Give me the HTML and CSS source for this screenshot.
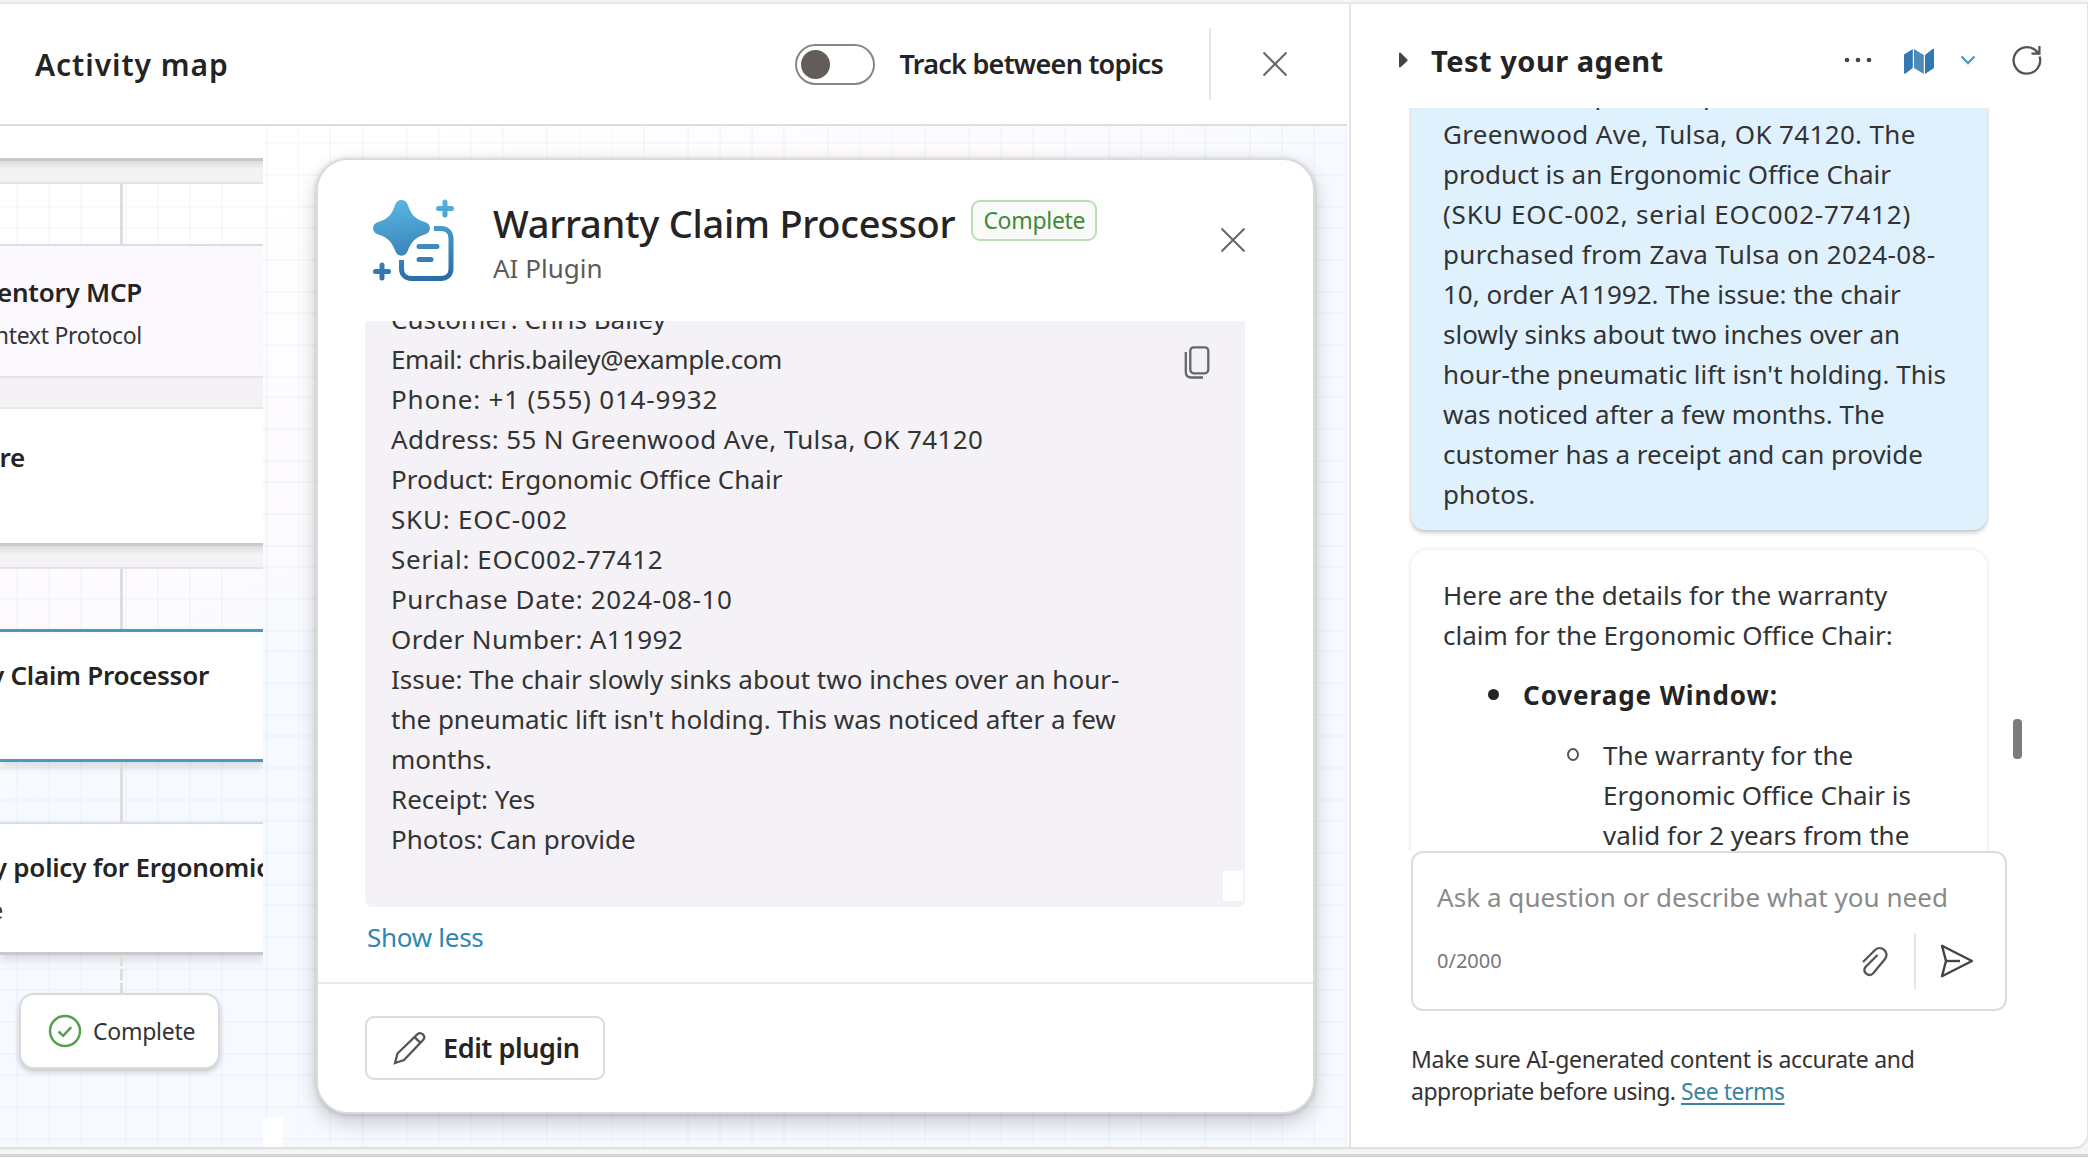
FILE: index.html
```html
<!DOCTYPE html>
<html lang="en">
<head>
<meta charset="utf-8">
<title>Activity map</title>
<link rel="stylesheet" href="styles.css">
</head>
<body>
<div class="app">
  <main class="map">
    <header class="map-head">
      <h1>Activity map</h1>
      <span class="toggle"><span class="knob"></span></span>
      <span class="toggle-label">Track between topics</span>
      <span class="head-divider"></span>
      <svg class="close" width="26" height="26" viewBox="0 0 26 26"><path d="M1.5 1.5l23 23M24.5 1.5l-23 23"/></svg>
    </header>
    <div class="canvas">
      <div class="grid"></div>
      <section class="flow">
        <div class="prev-node"></div>
        <div class="band"></div>
        <div class="link"></div>
        <div class="node mcp"><div class="name w-mcp">Inventory MCP</div><div class="kind w-mcp">Model Context Protocol</div></div>
        <div class="band plain"></div>
        <div class="node store"><div class="name w-store">Get store</div></div>
        <div class="band"></div>
        <div class="link"></div>
        <div class="node active"><div class="name w-claim">Warranty Claim Processor</div></div>
        <div class="link"></div>
        <div class="node policy"><div class="name w-policy">Warranty policy for Ergonomic</div><div class="kind w-know">Knowledge</div></div>
        <div class="link dashed"></div>
        <div class="done">
          <svg width="34" height="34" viewBox="0 0 34 34"><circle cx="17" cy="17" r="15"/><path d="M10.5 17.5l4.7 4.3 8-8.6"/></svg>
          <span>Complete</span>
        </div>
      </section>
      <span class="corner"></span>
      <section class="card">
        <div class="card-head">
          <svg class="logo" width="82" height="82" viewBox="0 0 82 82">
            <defs><linearGradient id="lg" gradientUnits="userSpaceOnUse" x1="34" y1="0" x2="44" y2="82"><stop offset="0" stop-color="#58b7e0"/><stop offset="1" stop-color="#2c6ca8"/></linearGradient></defs>
            <path fill="url(#lg)" d="M28.5 1c3 0 5.300 1.800 6.200 4.600C38 15 41 19.500 51 22.800c8 2 8 11 0 13C41 39 38 44 34.700 52c-2 6.200-10.400 6.200-12.400 0C19 44 16 39 6 35.800c-8-2-8-11 0-13C16 19.500 19 15 22.300 5.600 23.200 2.800 25.500 1 28.500 1z"/>
            <g fill="none" stroke="url(#lg)" stroke-width="5">
              <path d="M61 29.500h7c6 0 10 4 10 10v30c0 6-4 10-10 10H38.500c-6 0-10-4-10-10V61"/>
              <path stroke-linecap="round" d="M46 47.500h18M46 60.500h12"/>
              <path stroke-linecap="round" d="M72 3v13M65.500 9.500h13M9 66v13M2.500 72.500h13"/>
            </g>
          </svg>
          <div class="titles">
            <div class="title-row"><h2>Warranty Claim Processor</h2><span class="badge">Complete</span></div>
            <div class="subtitle">AI Plugin</div>
          </div>
          <svg class="close card-close" width="26" height="26" viewBox="0 0 26 26"><path d="M1.500 1.500l23 23M24.500 1.500l-23 23"/></svg>
        </div>
        <div class="details">
          <div class="detail-text">
            <div>Customer: Chris Bailey</div>
            <div class="tight">Email: chris.bailey@example.com</div>
            <div class="widest">Phone: +1 (555) 014-9932</div>
            <div class="wide">Address: 55 N Greenwood Ave, Tulsa, OK 74120</div>
            <div>Product: Ergonomic Office Chair</div>
            <div class="widest">SKU: EOC-002</div>
            <div class="wider">Serial: EOC002-77412</div>
            <div class="wider">Purchase Date: 2024-08-10</div>
            <div class="wide">Order Number: A11992</div>
            <div>Issue: The chair slowly sinks about two inches over an hour-<br>the pneumatic lift isn't holding. This was noticed after a few<br>months.</div>
            <div>Receipt: Yes</div>
            <div>Photos: Can provide</div>
          </div>
          <svg class="copy" width="26" height="33" viewBox="0 0 26 33"><rect x="6.300" y="1.300" width="18" height="26" rx="3.500"/><path d="M1.800 6v20c0 3.500 2 5.500 5.500 5.500H19"/></svg>
          <span class="resize"></span>
        </div>
        <a class="show-less">Show less</a>
        <div class="card-foot">
          <button class="edit"><svg width="34" height="34" viewBox="0 0 34 34"><path d="M2 32l2.500-9.500L24.500 3.200c3.500-3 8.800 1.800 5.800 5.600L11 29z M21.500 6.200l6.300 6"/></svg>Edit plugin</button>
        </div>
      </section>
    </div>
  </main>
  <aside class="chat">
    <header class="chat-head">
      <svg class="caret" width="9" height="16" viewBox="0 0 9 16"><path d="M0 1.500C0 .5 1 .2 1.800 1L8 7c.8.800.8 1.500 0 2.200L1.800 15C1 15.800 0 15.500 0 14.500z"/></svg>
      <h3>Test your agent</h3>
      <svg class="dots" width="28" height="6" viewBox="0 0 28 6"><circle cx="3" cy="3" r="2.300"/><circle cx="14" cy="3" r="2.300"/><circle cx="25" cy="3" r="2.300"/></svg>
      <svg class="mapicon" width="30" height="27" viewBox="0 0 30 27"><path d="M0 6.500L8.800 1v19L1.500 25.500Q0 26.500 0 24.500z"/><path class="fold" d="M10 1l9.800 6v19L10 20z"/><path d="M21 7l7.500-6Q30 0 30 2v18l-9 6z"/></svg>
      <svg class="chev" width="16" height="10" viewBox="0 0 16 10"><path d="M1.500 1.500L8 8l6.500-6.500"/></svg>
      <svg class="refresh" width="32" height="32" viewBox="0 0 32 32"><path d="M28.600 12.500A13.300 13.300 0 1 1 23.500 5.500L28 9.300M20.500 9.600h7.900V2"/></svg>
    </header>
    <div class="log">
      <div class="bubble">Customer reports help at 55 N<br><span class="wide">Greenwood Ave, Tulsa, OK 74120. The</span><br>product is an Ergonomic Office Chair<br><span class="widest">(SKU EOC-002, serial EOC002-77412)</span><br><span class="wide">purchased from Zava Tulsa on 2024-08-</span><br>10, order A11992. The issue: the chair<br>slowly sinks about two inches over an<br>hour-the pneumatic lift isn't holding. This<br>was noticed after a few months. The<br>customer has a receipt and can provide<br>photos.</div>
      <div class="reply">
        <p>Here are the details for the warranty<br>claim for the Ergonomic Office Chair:</p>
        <div class="item"><span class="disc"></span><b>Coverage Window:</b></div>
        <div class="item sub"><span class="ring"></span><span>The warranty for the<br>Ergonomic Office Chair is<br>valid for 2 years from the</span></div>
      </div>
      <span class="thumb"></span>
    </div>
    <div class="composer">
      <div class="placeholder">Ask a question or describe what you need</div>
      <div class="tools">
        <span class="count">0/2000</span>
        <svg class="clip" width="28" height="32" viewBox="0 0 28 32"><path d="M2 17L14 5c6-5.500 15 2 10 9L12 28.500c-4.500 4-11-1.500-7.500-6.500L16.500 10"/></svg>
        <span class="tool-divider"></span>
        <svg class="send" width="34" height="34" viewBox="0 0 34 34"><path d="M2 1.800L32 17 2 32.200 6 17z"/><path d="M6 17h14"/></svg>
      </div>
    </div>
    <p class="terms">Make sure AI-generated content is accurate and<br><span>appropriate before using. <a>See terms</a></span></p>
  </aside>
</div>
<footer class="edge"></footer>
</body>
</html>
```
FILE: styles.css
```css
* { box-sizing: border-box; }
body { margin: 0; width: 2088px; height: 1158px; overflow: hidden; background: #f5f5f6; color: #333; font: 26px/40px "Noto Sans", "Open Sans", sans-serif; display: flex; flex-direction: column; }
h1, h2, h3, p { margin: 0; }
svg { display: block; flex: none; fill: none; }

.app { display: flex; height: 1145px; background: #fff; border-top: 2px solid #e8e8e8; border-right: 1px solid #e3e3e6; border-bottom-right-radius: 14px; margin-top: 2px; box-shadow: 0 2px 2px #dcdcde; flex: none; }
.edge { height: 3px; margin-top: 7px; background: #d3d2d5; flex: none; }

.map { width: 1349px; display: flex; flex-direction: column; }
.map-head { height: 122px; width: 1347px; border-bottom: 2px solid #dedddb; display: flex; align-items: center; padding: 0 59px 0 35px; }
h1 { font-size: 30px; font-weight: 600; letter-spacing: .95px; margin-right: auto; color: #242424; position: relative; top: 1px; }
.toggle { width: 80px; height: 41px; border: 2px solid #888685; border-radius: 21px; padding: 4px; }
.knob { display: block; width: 29px; height: 29px; border-radius: 50%; background: #635c59; }
.toggle-label { font-size: 27px; font-weight: 600; letter-spacing: -.74px; color: #242424; margin-left: 24px; }
.head-divider { width: 2px; height: 72px; background: #e6e6e6; margin: 0 51px 0 46px; }
.close { stroke: #666; stroke-width: 2; }

.canvas { position: relative; flex: 1; width: 1347px; overflow: hidden; background: linear-gradient(154deg, #fff 12%, #fdfbfe 26%, #fdfbfe 32%, #f6faff 41%, #f6faff); }
.grid { position: absolute; inset: 0; opacity: .6;
  background:
    repeating-linear-gradient(90deg, rgba(205,228,240,.3) 0 2px, transparent 2px 32px, rgba(205,228,240,.3) 32px 34px, transparent 34px 64px, rgba(205,228,240,.3) 64px 66px, transparent 66px 96px, rgba(205,228,240,.3) 96px 98px, transparent 98px 140.500px) -15.500px 0 / 1405px 100%,
    repeating-linear-gradient(180deg, rgba(205,228,240,.3) 0 2px, transparent 2px 32px, rgba(205,228,240,.3) 32px 34px, transparent 34px 64px, rgba(205,228,240,.3) 64px 66px, transparent 66px 84.700px) 0 -68.500px / 100% 1185.800px; }

.flow { position: absolute; left: 0; top: 0; width: 263px; height: 1019px; overflow: hidden; display: flex; flex-direction: column; }
.flow > * { flex: none; }
.prev-node { height: 35px; background: #fff; border-bottom: 3px solid #c9c8ca; }
.band { height: 23px; background: linear-gradient(#dddcde, #f0eff0 7px, #f4f2f5 8px); border-bottom: 2px solid #e5e3e6; }
.band.plain { height: 31px; background: #f4f2f5; border-bottom-color: #eae8e6; }
.link { width: 3px; height: 60px; margin-left: 120px; background: #dfdcde; }
.node { background: #fff; border-top: 2px solid #deddde; border-bottom: 3px solid #c9c8ca; }
.name { font-weight: 600; letter-spacing: -.25px; color: #242424; white-space: nowrap; display: flex; justify-content: flex-end; }
.kind { font-size: 23px; line-height: 36px; letter-spacing: -.3px; white-space: nowrap; display: flex; justify-content: flex-end; }
.w-mcp { width: 142px; } .w-store { width: 25px; } .w-claim { width: 209px; } .w-policy { width: 269px; } .w-know { width: 3px; }
.mcp { height: 134px; background: #fbf9fd; border-bottom: 2px solid #e5e3e6; padding-top: 26px; }
.mcp .kind { margin-top: 5px; }
.store { height: 137px; border-top: 0; padding-top: 28px; }
.active { height: 133px; border-top-width: 3px; border-color: #4b97be; padding-top: 23px; box-shadow: 0 5px 8px rgba(0,0,0,.12); }
.policy { height: 133px; padding-top: 23px; box-shadow: 0 5px 8px rgba(0,0,0,.12); }
.policy .kind { margin-top: 5px; }
.link.dashed { height: 38px; background: repeating-linear-gradient(#dfdcde 0 11px, transparent 11px 14px); }
.done { width: 201px; height: 76px; margin-left: 19px; background: #fff; border: 2px solid #dddbd9; border-radius: 15px; box-shadow: 0 3px 5px rgba(0,0,0,.2); display: flex; align-items: center; padding-left: 27px; gap: 11px; font-size: 23px; letter-spacing: -.25px; }
.done svg { stroke: #55a04d; stroke-width: 2.500; }
.corner { position: absolute; left: 263px; bottom: 0; width: 20px; height: 30px; background: #fff; }

.card { position: absolute; left: 316px; top: 32px; width: 999px; height: 956px; background: #fff; border: 2px solid #dddbd9; border-radius: 32px; box-shadow: 0 8px 20px rgba(0,0,0,.2), 0 1px 5px rgba(0,0,0,.16); display: flex; flex-direction: column; }
.card-head { height: 161px; padding: 39px 67px 0 55px; display: flex; align-items: flex-start; flex: none; }
.titles { margin-left: 38px; margin-right: auto; }
.title-row { display: flex; height: 51px; align-items: flex-start; gap: 16px; }
h2 { font-size: 38px; line-height: 48px; font-weight: 500; letter-spacing: -.27px; color: #242424; white-space: nowrap; }
.badge { height: 41px; margin-top: 1px; padding: 0 10px; line-height: 36px; font-size: 23px; letter-spacing: -.3px; color: #43893a; background: #f8fbf7; border: 2px solid #b9e0b3; border-radius: 9px; }
.subtitle { line-height: 36px; color: #5c5c5c; }
.card-close { margin-top: 28px; }
.details { position: relative; width: 880px; height: 586px; margin-left: 47px; background: #f4f2f6; border-radius: 0 0 7px 7px; overflow: hidden; padding-left: 26px; flex: none; }
.detail-text { margin-top: -22px; white-space: nowrap; }
.tight { letter-spacing: -.43px; }
.wide { letter-spacing: .35px; }
.wider { letter-spacing: .62px; }
.widest { letter-spacing: .8px; }
.copy { position: absolute; left: 819px; top: 25px; stroke: #666; stroke-width: 2.300; }
.resize { position: absolute; right: 2px; bottom: 6px; width: 20px; height: 30px; background: #fff; }
.show-less { margin: 10px 0 0 49px; color: #2f86b6; letter-spacing: -.28px; height: 65px; flex: none; }
.card-foot { border-top: 2px solid #e8e8e8; padding: 32px 47px 0; }
.edit { width: 240px; height: 64px; border: 2px solid #dddbd9; border-radius: 9px; background: #fff; display: flex; align-items: center; padding: 0 0 0 26px; gap: 16px; font: 600 27px/40px "Noto Sans", "Open Sans", sans-serif; letter-spacing: -.42px; color: #242424; white-space: nowrap; }
.edit svg { stroke: #555; stroke-width: 2.300; }

.chat { flex: 1; border-left: 2px solid #e5e4e9; padding-left: 60px; display: flex; flex-direction: column; }
.chat-head { height: 104px; display: flex; align-items: center; padding-top: 7px; margin-left: -12px; flex: none; }
.caret { fill: #444; }
h3 { font-size: 29px; font-weight: 700; letter-spacing: .5px; margin-left: 23px; width: 413px; color: #242424; position: relative; top: 1px; }
.dots { fill: #444; }
.mapicon { fill: #3179ae; margin-left: 32px; position: relative; top: 2px; }
.fold { fill: #4a8dbb; }
.chev { stroke: #4a9ac6; stroke-width: 2.300; margin-left: 26px; }
.refresh { stroke: #555; stroke-width: 2.300; margin-left: 35px; }
.log { position: relative; height: 743px; overflow: hidden; margin-left: -6px; padding-left: 6px; flex: none; }
.bubble { margin-top: -54px; width: 576px; height: 476px; padding: 20px 0 0 32px; border-radius: 14px; background: #e0f1fe; box-shadow: 0 3px 4px rgba(0,0,0,.2), 0 0 3px rgba(0,0,0,.08); white-space: nowrap; }
.reply { width: 576px; height: 400px; margin: 20px 0 0; padding: 25px 0 0 32px; border-radius: 16px; background: #fff; box-shadow: 0 0 4px rgba(90,90,160,.2); white-space: nowrap; }
.item { display: flex; margin-top: 20px; padding-left: 45px; }
.item b { margin-left: 24px; letter-spacing: .95px; color: #242424; }
.disc { width: 11px; height: 11px; border-radius: 50%; background: #242424; margin-top: 14px; }
.item.sub { padding-left: 124px; }
.ring { width: 12px; height: 13px; border: 2.500px solid #555; border-radius: 50%; margin: 13px 24px 0 0; }
.thumb { position: absolute; left: 608px; top: 611px; width: 9px; height: 40px; border-radius: 4px; background: #7c7c7c; }
.composer { width: 596px; height: 160px; border: 2px solid #dedcd7; border-radius: 12px; background: #fff; padding: 24px 31px 0 24px; flex: none; }
.placeholder { color: #8a8a8a; white-space: nowrap; letter-spacing: .05px; }
.tools { display: flex; align-items: center; height: 56px; margin-top: 16px; }
.count { font-size: 20px; color: #777; margin-right: auto; }
.clip { stroke: #555; stroke-width: 2.300; }
.tool-divider { width: 2px; height: 56px; background: #e6e6e6; margin: 0 24px 0 25px; }
.send { stroke: #444; stroke-width: 2.400; stroke-linejoin: round; }
.terms { font-size: 23px; line-height: 32px; letter-spacing: -.3px; margin-top: 32px; white-space: nowrap; }
.terms span { letter-spacing: -.48px; }
.terms a { color: #3a83a3; text-decoration: underline; text-decoration-thickness: 2px; text-underline-offset: 3px; }
```
